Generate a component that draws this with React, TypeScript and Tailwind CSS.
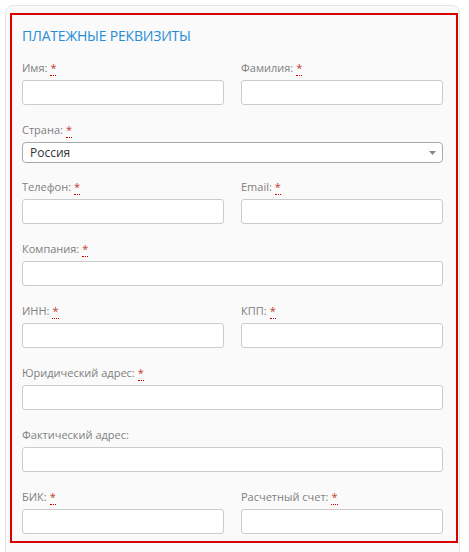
import React from "react";

const Req = () => (
  <abbr
    title="обязательно"
    className="text-[#c0392b] no-underline border-b border-dotted border-[#c00] ml-[3px] leading-none"
  >
    *
  </abbr>
);

function Field({
  label,
  required = true,
  wide = false,
  last = false,
}: {
  label: string;
  required?: boolean;
  wide?: boolean;
  last?: boolean;
}) {
  return (
    <div className={(wide ? "col-span-2 " : "") + "flex flex-col " + (last ? "mb-0" : "mb-[16px]")}>
      <label className="h-[17px] leading-[17px] mb-[4px] text-[11px] text-[#808080] whitespace-nowrap">
        {label}
        {required && <Req />}
      </label>
      <div className="h-[25px] border border-[#cccccc] rounded-[3px] bg-white" />
    </div>
  );
}

export default function App() {
  return (
    <div
      className="bg-white w-[469px] h-[552px] overflow-hidden pt-[5px] pl-[5px]"
      style={{ fontFamily: '"Open Sans", "Noto Sans", sans-serif' }}
    >
      <div className="w-[455px] h-[580px] border border-[#e4e4e4] rounded-[8px] bg-[#fafafa] pt-[7px] pl-[4px]">
        <div className="w-[448px] border-2 border-[#d90000] pl-[10px] pr-[13px] pt-[11px] pb-[7px]">
          <h2 className="text-[14px] leading-[20px] text-[#2a8dd4] mb-[13px] tracking-[-0.2px]">
            ПЛАТЕЖНЫЕ РЕКВИЗИТЫ
          </h2>
          <div className="grid grid-cols-2 gap-x-[17px]">
            <Field label="Имя:" />
            <Field label="Фамилия:" />
            <div className="col-span-2 flex flex-col mb-[15px]">
              <label className="h-[17px] leading-[17px] mb-[4px] text-[11px] text-[#808080]">
                Страна:
                <Req />
              </label>
              <div className="h-[21px] border border-[#aaaaaa] rounded-[4px] bg-white flex items-center justify-between pl-[7px] pr-[6px]">
                <span className="text-[12px] text-[#333] leading-none">Россия</span>
                <svg width="7" height="4" viewBox="0 0 7 4">
                  <path d="M0 0 L7 0 L3.5 4 Z" fill="#888" />
                </svg>
              </div>
            </div>
            <Field label="Телефон:" />
            <Field label="Email:" />
            <Field label="Компания:" wide />
            <Field label="ИНН:" />
            <Field label="КПП:" />
            <Field label="Юридический адрес:" wide />
            <Field label="Фактический адрес:" required={false} wide />
            <Field label="БИК:" last />
            <Field label="Расчетный счет:" last />
          </div>
        </div>
      </div>
    </div>
  );
}
